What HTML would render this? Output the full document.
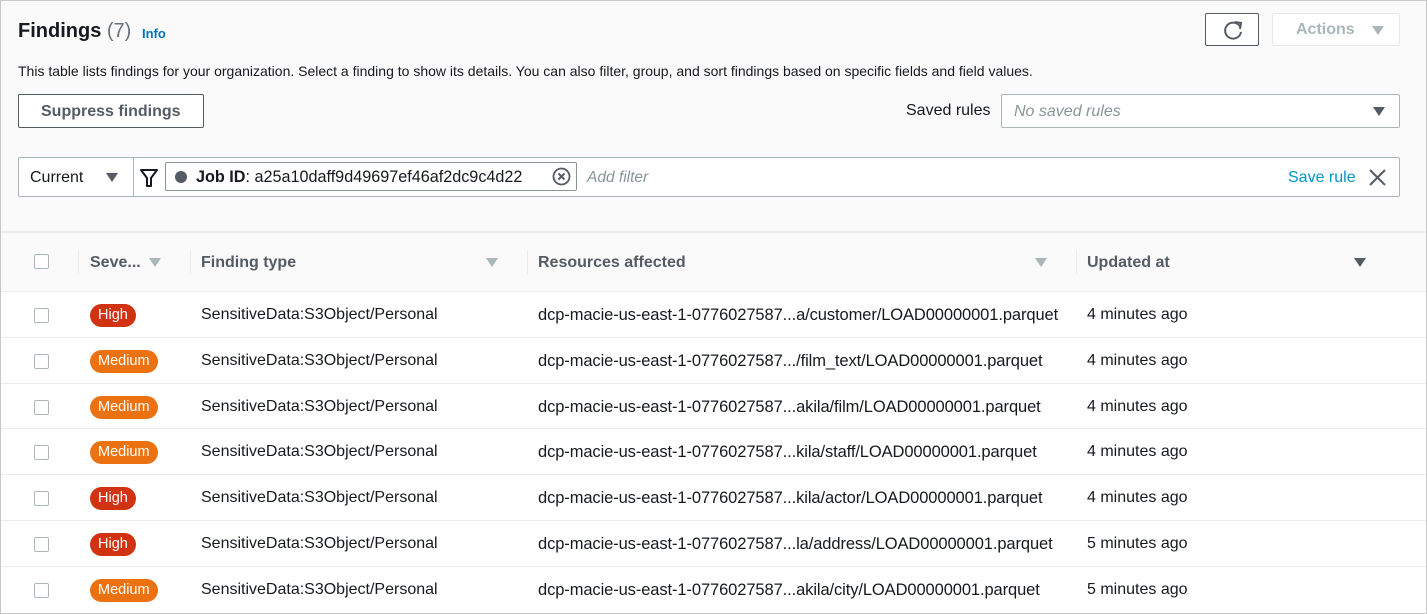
<!DOCTYPE html>
<html><head><meta charset="utf-8"><style>
*{box-sizing:border-box;margin:0;padding:0}
body{width:1427px;height:614px;background:#fff;font-family:"Liberation Sans",Arial,sans-serif;color:#16191f;position:relative;overflow:hidden}
.frame{position:absolute;left:0;top:0;width:1427px;height:614px;border:1px solid #c8c8c8;background:#fafafa}
.a{position:absolute;white-space:nowrap}
.btn{position:absolute;border:1px solid #545b64;border-radius:2px;background:#fff}
.cb{position:absolute;left:34px;width:15px;height:15px;border:1px solid #aab7b8;border-radius:2px;background:#fff}
.row{position:absolute;left:1px;width:1425px;height:46px;background:#fff;border-top:1px solid #eaeded}
.row .a{top:14px;font-size:16px}
.row .a.r{font-size:16.5px;letter-spacing:-0.1px}
.row .badge{position:absolute;top:12px;left:89px;height:23px;border-radius:12px;color:#fff;font-size:14.5px;line-height:23px;padding:0 8px}
.high{background:#d13212}.med{background:#ec7211}
.tri{width:0;height:0;border-left:6px solid transparent;border-right:6px solid transparent;border-top:9px solid #545b64;position:absolute}
.sep{position:absolute;top:250px;width:1px;height:24px;background:#eaeded}
.hd{font-weight:bold;color:#545b64;font-size:16px;top:254px}
</style></head><body>
<div class="frame"></div>
<div class="a" style="left:18px;top:20px;font-size:20px;font-weight:bold">Findings <span style="font-weight:normal;color:#687078">(7)</span></div>
<div class="a" style="left:142px;top:26px;font-size:13px;font-weight:bold;color:#0073bb">Info</div>
<div class="a" style="left:18px;top:63px;font-size:14px;color:#16191f">This table lists findings for your organization. Select a finding to show its details. You can also filter, group, and sort findings based on specific fields and field values.</div>
<div class="btn" style="left:1205px;top:13px;width:54px;height:33px"><svg width="54" height="33" viewBox="0 0 54 33"><path d="M34 12.5 A8 8 0 1 0 35 18" fill="none" stroke="#545b64" stroke-width="2"/><path d="M29 8 L35 9 L34 15" fill="none" stroke="#545b64" stroke-width="2"/></svg></div>
<div class="btn" style="left:1272px;top:13px;width:128px;height:33px;border-color:#e5e9ea"><span class="a" style="left:23px;top:7px;font-size:16px;font-weight:bold;color:#aab7b8">Actions</span><div class="tri" style="left:99px;top:12px;border-top-color:#aab7b8"></div></div>
<div class="btn" style="left:18px;top:94px;width:186px;height:34px"><span class="a" style="left:22px;top:8px;font-size:16px;font-weight:bold;color:#545b64">Suppress findings</span></div>
<div class="a" style="left:906px;top:102px;font-size:16px">Saved rules</div>
<div class="btn" style="left:1001px;top:94px;width:399px;height:34px;border-color:#aab7b8"><span class="a" style="left:12px;top:8px;font-size:16px;font-style:italic;color:#879596">No saved rules</span><div class="tri" style="left:371px;top:12px"></div></div>
<div class="btn" style="left:18px;top:157px;width:1382px;height:40px;border-color:#aab7b8"></div>
<div class="a" style="left:30px;top:169px;font-size:16px">Current</div>
<div class="tri" style="left:106px;top:173px"></div>
<div class="a" style="left:133px;top:158px;width:1px;height:38px;background:#aab7b8"></div>
<svg class="a" style="left:139px;top:168px" width="20" height="20" viewBox="0 0 20 20"><path d="M2 2 H18 L12 10 V18 H8 V10 Z" fill="none" stroke="#16191f" stroke-width="2" stroke-linejoin="round"/></svg>
<div class="a" style="left:165px;top:162px;width:412px;height:29px;border:1px solid #879596;border-radius:2px;background:#fff"></div>
<div class="a" style="left:175px;top:171px;width:12px;height:12px;border-radius:6px;background:#545b64"></div>
<div class="a" style="left:196px;top:168px;font-size:16.2px;color:#16191f"><b>Job ID</b>: a25a10daff9d49697ef46af2dc9c4d22</div>
<svg class="a" style="left:552px;top:167px" width="19" height="19" viewBox="0 0 19 19"><circle cx="9.5" cy="9.5" r="8" fill="none" stroke="#545b64" stroke-width="1.8"/><path d="M6.5 6.5 L12.5 12.5 M12.5 6.5 L6.5 12.5" stroke="#545b64" stroke-width="2"/></svg>
<div class="a" style="left:587px;top:169px;font-size:15.5px;font-style:italic;color:#879596">Add filter</div>
<div class="a" style="left:1288px;top:169px;font-size:16px;color:#0095c8">Save rule</div>
<svg class="a" style="left:1369px;top:169px" width="17" height="17" viewBox="0 0 17 17"><path d="M1 1 L16 16 M16 1 L1 16" stroke="#545b64" stroke-width="2"/></svg>
<div class="a" style="left:1px;top:231px;width:1425px;height:2px;background:#eaeded"></div>
<div class="cb" style="top:254px"></div>
<div class="sep" style="left:78px"></div><div class="sep" style="left:190px"></div><div class="sep" style="left:527px"></div><div class="sep" style="left:1076px"></div>
<div class="a hd" style="left:90px">Seve...</div><div class="tri" style="left:149px;top:258px;border-top-color:#aab7b8"></div>
<div class="a hd" style="left:201px">Finding type</div><div class="tri" style="left:486px;top:258px;border-top-color:#aab7b8"></div>
<div class="a hd" style="left:538px">Resources affected</div><div class="tri" style="left:1035px;top:258px;border-top-color:#aab7b8"></div>
<div class="a hd" style="left:1087px">Updated at</div><div class="tri" style="left:1354px;top:258px"></div>

<div class="row" style="top:291px"><div class="cb" style="top:16px;left:33px"></div><span class="badge high">High</span><span class="a" style="left:200px">SensitiveData:S3Object/Personal</span><span class="a r" style="left:537px">dcp-macie-us-east-1-0776027587...a/customer/LOAD00000001.parquet</span><span class="a" style="left:1086px">4 minutes ago</span></div>
<div class="row" style="top:337px"><div class="cb" style="top:16px;left:33px"></div><span class="badge med">Medium</span><span class="a" style="left:200px">SensitiveData:S3Object/Personal</span><span class="a r" style="left:537px">dcp-macie-us-east-1-0776027587.../film_text/LOAD00000001.parquet</span><span class="a" style="left:1086px">4 minutes ago</span></div>
<div class="row" style="top:383px"><div class="cb" style="top:16px;left:33px"></div><span class="badge med">Medium</span><span class="a" style="left:200px">SensitiveData:S3Object/Personal</span><span class="a r" style="left:537px">dcp-macie-us-east-1-0776027587...akila/film/LOAD00000001.parquet</span><span class="a" style="left:1086px">4 minutes ago</span></div>
<div class="row" style="top:428px"><div class="cb" style="top:16px;left:33px"></div><span class="badge med">Medium</span><span class="a" style="left:200px">SensitiveData:S3Object/Personal</span><span class="a r" style="left:537px">dcp-macie-us-east-1-0776027587...kila/staff/LOAD00000001.parquet</span><span class="a" style="left:1086px">4 minutes ago</span></div>
<div class="row" style="top:474px"><div class="cb" style="top:16px;left:33px"></div><span class="badge high">High</span><span class="a" style="left:200px">SensitiveData:S3Object/Personal</span><span class="a r" style="left:537px">dcp-macie-us-east-1-0776027587...kila/actor/LOAD00000001.parquet</span><span class="a" style="left:1086px">4 minutes ago</span></div>
<div class="row" style="top:520px"><div class="cb" style="top:16px;left:33px"></div><span class="badge high">High</span><span class="a" style="left:200px">SensitiveData:S3Object/Personal</span><span class="a r" style="left:537px">dcp-macie-us-east-1-0776027587...la/address/LOAD00000001.parquet</span><span class="a" style="left:1086px">5 minutes ago</span></div>
<div class="row" style="top:566px;height:47px"><div class="cb" style="top:16px;left:33px"></div><span class="badge med">Medium</span><span class="a" style="left:200px">SensitiveData:S3Object/Personal</span><span class="a r" style="left:537px">dcp-macie-us-east-1-0776027587...akila/city/LOAD00000001.parquet</span><span class="a" style="left:1086px">5 minutes ago</span></div>
</body></html>
